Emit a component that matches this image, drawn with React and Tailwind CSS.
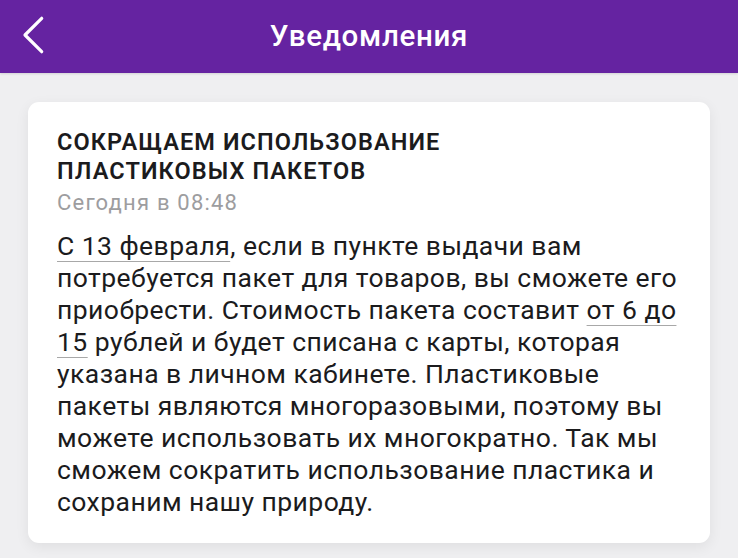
const notice = {
  title: ["Сокращаем использование", "пластиковых пакетов"],
  time: "Сегодня в 08:48",
};

function Mark({ children }) {
  return (
    <span className="underline decoration-[#a8a8a8] decoration-1 underline-offset-[6px]">
      {children}
    </span>
  );
}

// body copy, broken into the lines as laid out in the card
const lines = [
  <>
    <Mark>С 13 февраля</Mark>, если в пункте выдачи вам
  </>,
  "потребуется пакет для товаров, вы сможете его",
  <>
    приобрести. Стоимость пакета составит <Mark>от 6 до</Mark>
  </>,
  <>
    <Mark>15</Mark> рублей и будет списана с карты, которая
  </>,
  "указана в личном кабинете. Пластиковые",
  "пакеты являются многоразовыми, поэтому вы",
  "можете использовать их многократно. Так мы",
  "сможем сократить использование пластика и",
  "сохраним нашу природу.",
];

export default function App() {
  return (
    <div
      className="min-h-[558px] bg-[#efeff1] text-[#1b1b1d]"
      style={{ fontFamily: "Roboto, 'Noto Sans', sans-serif" }}
    >
      <header className="relative flex h-[73px] items-center justify-center bg-[#6523a1] shadow-[0_1px_2px_rgba(0,0,0,0.12)]">
        <button className="absolute left-[20px] top-[15px] text-white">
          <svg width="28" height="40" viewBox="0 0 28 40" fill="none">
            <path
              d="M21.7 3.3 L5 20 L21.7 36.7"
              stroke="currentColor"
              strokeWidth="3.2"
              strokeLinecap="round"
              strokeLinejoin="round"
            />
          </svg>
        </button>
        <h1 className="text-[29.5px] font-medium tracking-[0.7px] text-white">
          Уведомления
        </h1>
      </header>

      <div className="pl-[28px] pr-[28px] pt-[29px]">
        <div className="rounded-[11px] bg-white px-[29px] pb-[25px] pt-[26px] shadow-[0_4px_14px_rgba(0,0,0,0.07)]">
          <h2 className="text-[23.5px] font-semibold uppercase leading-[29px] tracking-[1.1px]">
            {notice.title.map((t) => (
              <span key={t} className="block">
                {t}
              </span>
            ))}
          </h2>
          <p className="mt-[4px] text-[22px] leading-[26px] tracking-[1.2px] text-[#9d9d9f]">
            {notice.time}
          </p>
          <div className="mt-[14px] text-[26.5px] leading-[32px] tracking-[0.45px]">
            {lines.map((line, i) => (
              <span key={i} className="block whitespace-nowrap">
                {line}
              </span>
            ))}
          </div>
        </div>
      </div>
    </div>
  );
}
